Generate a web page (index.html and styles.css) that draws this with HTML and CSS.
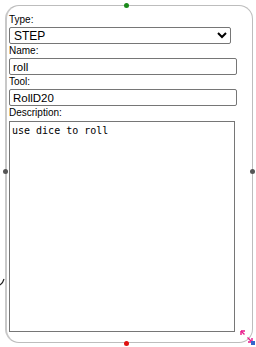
FILE: index.html
```html
<!DOCTYPE html>
<html>
    <head>
        <link rel="stylesheet" href="styles.css">
    </head>
    <body>
        <div class="canvas">
            <svg class="edge" width="6" height="10" viewBox="0 0 6 10"><path d="M0 8 Q3 6 4 2" stroke="#222" stroke-width="1.2" fill="none"/></svg>
            <div class="node">
                <label>Type:</label>
                <select class="type">
                    <option selected>STEP</option>
                    <option>DECISION</option>
                </select>
                <label>Name:</label>
                <input class="field" value="roll"/>
                <label>Tool:</label>
                <input class="field" value="RollD20"/>
                <label>Description:</label>
                <textarea class="description">use dice to roll</textarea>
                <span class="port top"></span>
                <span class="port bottom"></span>
                <span class="port left"></span>
                <span class="port right"></span>
                <svg class="resize" width="16" height="16" viewBox="0 0 16 16">
                    <path d="M2 2 L5.5 5.5 M8.5 8.5 L13 13" stroke="#e8198b" stroke-width="1.4"/>
                    <path d="M2 2 L2 6 M2 2 L6 2" stroke="#e8198b" stroke-width="1.4" fill="none"/>
                    <path d="M13 13 L13 9 M13 13 L9 13" stroke="#e8198b" stroke-width="1.4" fill="none"/>
                    <rect x="12" y="12" width="4" height="4" fill="#3366cc"/>
                </svg>
            </div>
        </div>
    </body>
</html>
```
FILE: styles.css
```css
* { margin: 0; padding: 0; box-sizing: border-box; font-family: "Liberation Sans", Arial, sans-serif; color: #000; }
html, body { width: 100%; height: 100%; background: #fff; }
body { padding: 5px 3px 5px 5px; }

.canvas { position: relative; width: 248px; height: 338px; }
.edge { position: absolute; left: -5px; top: 272px; }

.node { position: relative; width: 248px; height: 338px; border: 1px solid #bdbdbd; border-left: 2px solid #c8c8c8; border-radius: 14px; padding: 7px 14px 10px 2px; display: flex; flex-direction: column; align-items: flex-start; }
.node label { display: block; font-size: 10px; line-height: 14px; height: 14px; }
.node .type { width: 222px; height: 17px; font-size: 12px; border: 1px solid #767676; border-radius: 2px; padding: 0; background: #fff; }
.node .field { width: 228px; height: 17px; font-size: 11.5px; border: 1px solid #767676; border-radius: 2px; padding: 0 3px; }
.node .description { flex: 1; width: 226px; margin-top: 1px; font-family: "DejaVu Sans Mono", monospace; font-size: 10px; line-height: 13px; border: 1px solid #767676; padding: 2px 2px; resize: none; }

.port { position: absolute; width: 5px; height: 5px; border-radius: 50%; }
.port.top { background: #1a8a1a; left: 117px; top: -3px; }
.port.bottom { background: #e01010; left: 117px; bottom: -4px; }
.port.left { background: #555; left: -4px; top: 163px; }
.port.right { background: #555; right: -3px; top: 163px; }
.resize { position: absolute; right: -3px; bottom: -3px; }
```
